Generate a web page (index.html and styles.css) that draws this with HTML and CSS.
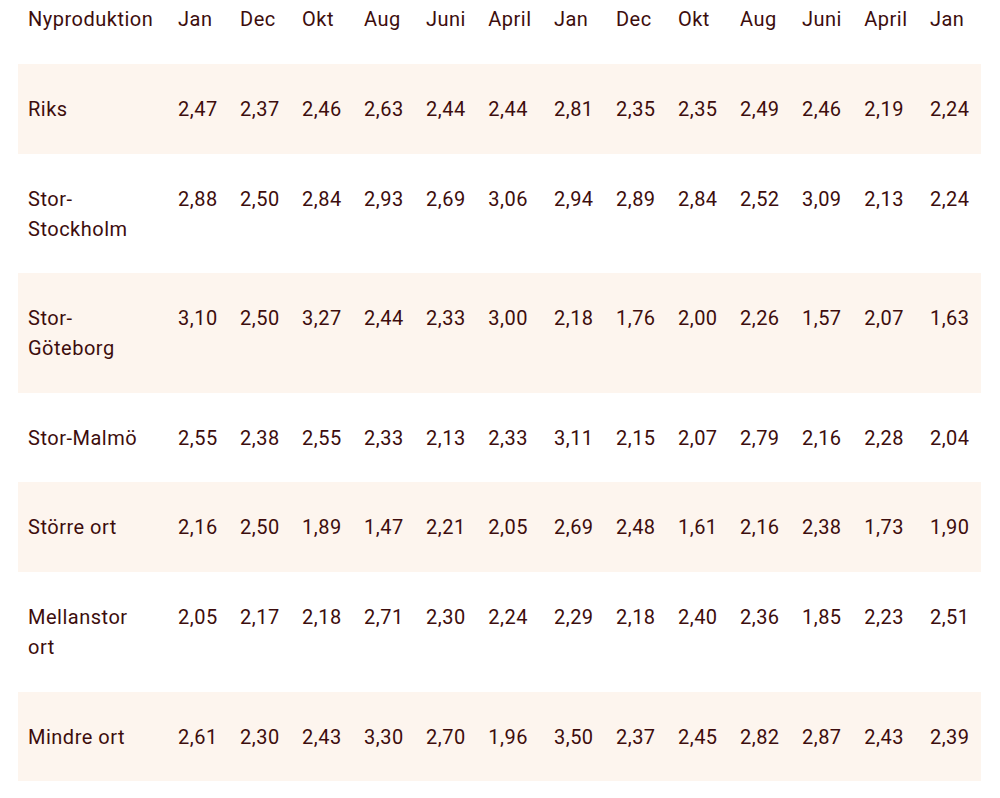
FILE: index.html
```html
<!DOCTYPE html>
<html lang="sv">
<head>
<meta charset="utf-8">
<link rel="stylesheet" href="styles.css">
</head>
<body>
<div class="wrap">
<table class="rates">
<thead>
<tr><th>Nyproduktion</th><th>Jan</th><th>Dec</th><th>Okt</th><th>Aug</th><th>Juni</th><th>April</th><th>Jan</th><th>Dec</th><th>Okt</th><th>Aug</th><th>Juni</th><th>April</th><th>Jan</th></tr>
</thead>
<tbody>
<tr class="alt"><td>Riks</td><td>2,47</td><td>2,37</td><td>2,46</td><td>2,63</td><td>2,44</td><td>2,44</td><td>2,81</td><td>2,35</td><td>2,35</td><td>2,49</td><td>2,46</td><td>2,19</td><td>2,24</td></tr>
<tr><td>Stor-Stockholm</td><td>2,88</td><td>2,50</td><td>2,84</td><td>2,93</td><td>2,69</td><td>3,06</td><td>2,94</td><td>2,89</td><td>2,84</td><td>2,52</td><td>3,09</td><td>2,13</td><td>2,24</td></tr>
<tr class="alt"><td>Stor-Göteborg</td><td>3,10</td><td>2,50</td><td>3,27</td><td>2,44</td><td>2,33</td><td>3,00</td><td>2,18</td><td>1,76</td><td>2,00</td><td>2,26</td><td>1,57</td><td>2,07</td><td>1,63</td></tr>
<tr><td>Stor-Malmö</td><td>2,55</td><td>2,38</td><td>2,55</td><td>2,33</td><td>2,13</td><td>2,33</td><td>3,11</td><td>2,15</td><td>2,07</td><td>2,79</td><td>2,16</td><td>2,28</td><td>2,04</td></tr>
<tr class="alt"><td>Större ort</td><td>2,16</td><td>2,50</td><td>1,89</td><td>1,47</td><td>2,21</td><td>2,05</td><td>2,69</td><td>2,48</td><td>1,61</td><td>2,16</td><td>2,38</td><td>1,73</td><td>1,90</td></tr>
<tr><td>Mellanstor ort</td><td>2,05</td><td>2,17</td><td>2,18</td><td>2,71</td><td>2,30</td><td>2,24</td><td>2,29</td><td>2,18</td><td>2,40</td><td>2,36</td><td>1,85</td><td>2,23</td><td>2,51</td></tr>
<tr class="alt"><td>Mindre ort</td><td>2,61</td><td>2,30</td><td>2,43</td><td>3,30</td><td>2,70</td><td>1,96</td><td>3,50</td><td>2,37</td><td>2,45</td><td>2,82</td><td>2,87</td><td>2,43</td><td>2,39</td></tr>
</tbody>
</table>
</div>
</body>
</html>
```
FILE: styles.css
```css
html, body {
  margin: 0;
  padding: 0;
  background: #ffffff;
}
.wrap {
  padding: 0 19px 0 18px;
}
.rates {
  width: 963px;
  border-collapse: collapse;
  font-family: Roboto, "Liberation Sans", sans-serif;
  font-size: 20px;
  letter-spacing: 0.5px;
  line-height: 30px;
  color: #3d0d0d;
}
.rates th,
.rates td {
  text-align: left;
  font-weight: 400;
  vertical-align: top;
  padding: 30px 11px 29.6px;
}
.rates th {
  padding-top: 4px;
  padding-bottom: 30px;
}
.rates th:first-child,
.rates td:first-child {
  padding-left: 10px;
  padding-right: 12px;
  width: 127px;
}
.rates tr.alt {
  background: #fdf5ee;
}
```
